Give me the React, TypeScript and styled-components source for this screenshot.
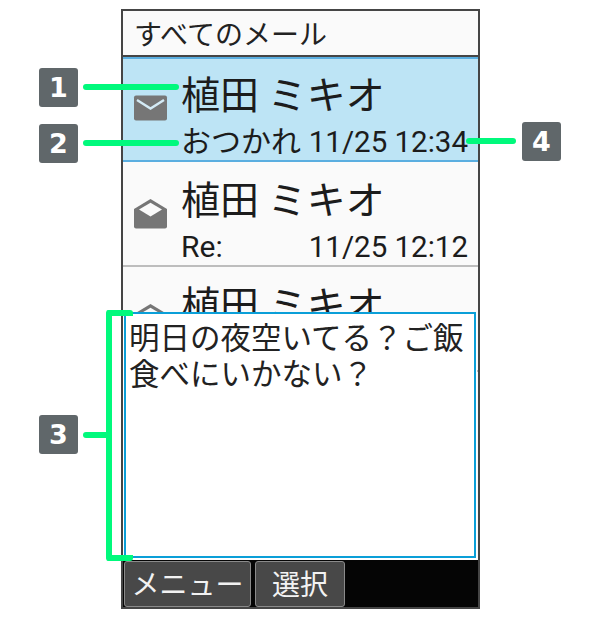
import * as React from 'react';
import styled, { createGlobalStyle } from 'styled-components';

const GlobalStyle = createGlobalStyle`
  html, body {
    margin: 0;
    padding: 0;
    background: #fff;
    font-family: Roboto, "Noto Sans CJK JP", sans-serif;
  }
`;

const Page = styled.div`
  position: relative;
  width: 600px;
  height: 617px;
  overflow: hidden;
  padding: 9px 0 0 121px;
  box-sizing: border-box;
`;

const Phone = styled.div`
  width: 359px;
  height: 600px;
  box-sizing: border-box;
  border: 2px solid #454545;
  background: #fafafa;
  display: flex;
  flex-direction: column;
`;

const Title = styled.div`
  flex: none;
  height: 46px;
  box-sizing: border-box;
  padding: 3px 0 0 11px;
  border-bottom: 2px solid #454545;
  font-size: 28px;
  line-height: 38px;
  color: #222;
  font-family: "Noto Sans CJK JP", sans-serif;
`;

const List = styled.div`
  position: relative;
  flex: 1;
  min-height: 0;
  overflow: hidden;
`;

const Row = styled.div<{ $selected?: boolean }>`
  height: 105px;
  box-sizing: border-box;
  display: flex;
  align-items: center;
  padding-left: 10px;
  background: ${p => (p.$selected ? '#bde4f5' : '#fafafa')};
  border-top: 2px solid ${p => (p.$selected ? '#5aaee0' : 'transparent')};
  border-bottom: 2px solid ${p => (p.$selected ? '#5aaee0' : '#bdbdbd')};
`;

const IconSlot = styled.div`
  flex: none;
  width: 35px;
  margin: 0 13px 3px 0;
  display: flex;
  align-items: center;
`;

const RowText = styled.div`
  flex: 1;
  min-width: 0;
  padding-right: 10px;
  display: flex;
  flex-direction: column;
`;

const Name = styled.div`
  font-size: 39px;
  line-height: 65px;
  color: #1c1c1c;
  white-space: pre;
  font-family: "Noto Sans CJK JP", sans-serif;
`;

const Meta = styled.div`
  display: flex;
  justify-content: space-between;
  align-items: baseline;
  min-height: 34px;
  font-size: 29.5px;
  line-height: 34px;
  color: #1c1c1c;
  white-space: pre;
`;

const Subject = styled.span`
  font-size: 30px;
`;

const Preview = styled.div`
  position: absolute;
  left: 1px;
  top: 255px;
  width: 352px;
  height: 246px;
  box-sizing: border-box;
  border: 2px solid #0a9fd8;
  background: #fff;
  padding: 4px 0 0 3px;
  font-size: 30.5px;
  line-height: 36px;
  color: #222;
  white-space: nowrap;
  font-family: "Noto Sans CJK JP", sans-serif;
  box-shadow: 0 2px 0 1px #fff;
`;

const SoftKeys = styled.div`
  flex: none;
  height: 47px;
  box-sizing: border-box;
  background: #050505;
  display: flex;
  gap: 4px;
  padding: 1px 0 0 1px;
`;

const SoftKey = styled.div<{ $width: number }>`
  width: ${p => p.$width}px;
  box-sizing: border-box;
  border: 1px solid #8a8a8a;
  border-radius: 3px;
  background: #484848;
  color: #f2f2f2;
  font-size: 28px;
  line-height: 42px;
  text-align: center;
  font-family: "Noto Sans CJK JP", sans-serif;
`;

const Badge = styled.div<{ $x: number; $y: number }>`
  position: absolute;
  left: ${p => p.$x}px;
  top: ${p => p.$y}px;
  width: 39px;
  height: 39px;
  border-radius: 3px;
  background: #60676a;
  color: #fff;
  font-family: "DejaVu Sans", sans-serif;
  font-weight: 700;
  font-size: 27px;
  line-height: 39px;
  text-align: center;
`;

const Leader = styled.div<{ $x: number; $y: number; $w: number }>`
  position: absolute;
  left: ${p => p.$x}px;
  top: ${p => p.$y}px;
  width: ${p => p.$w}px;
  height: 6px;
  border-radius: 3px;
  background: #00f97c;
`;

const Bracket = styled.div`
  position: absolute;
  left: 106px;
  top: 310px;
  width: 27px;
  height: 251px;
  box-sizing: border-box;
  border: 6px solid #00f97c;
  border-right: none;
  border-radius: 3px;
`;

const ClosedMail = () => (
  <svg width="35" height="26" viewBox="0 0 35 26">
    <rect x="1" y="0.5" width="33" height="25" rx="2" fill="#767676" />
    <path d="M4 5 L17.5 13.5 L31 5" fill="none" stroke="#d4ebf6" strokeWidth="2.4" />
  </svg>
);

const OpenMail = () => (
  <svg width="35" height="31" viewBox="0 0 35 31">
    <path d="M1 11 L17.5 1 L34 11 V28.5 a2 2 0 0 1 -2 2 H3 a2 2 0 0 1 -2 -2 Z" fill="#767676" />
    <path d="M6 11.5 L17.5 4.8 L29 11.5 L17.5 18.5 Z" fill="#fafafa" />
  </svg>
);

const mails = [
  { subject: 'おつかれ', time: '11/25 12:34', selected: true },
  { subject: 'Re:', time: '11/25 12:12', selected: false },
  { subject: '', time: '', selected: false },
];

export default function App() {
  return (
    <Page>
      <GlobalStyle />
      <Phone>
        <Title>すべてのメール</Title>
        <List>
          {mails.map((m, i) => (
            <Row key={i} $selected={m.selected}>
              <IconSlot>{m.selected ? <ClosedMail /> : <OpenMail />}</IconSlot>
              <RowText>
                <Name>植田 ミキオ</Name>
                <Meta>
                  <Subject>{m.subject}</Subject>
                  <span>{m.time}</span>
                </Meta>
              </RowText>
            </Row>
          ))}
          <Preview>
            明日の夜空いてる？ご飯
            <br />
            食べにいかない？
          </Preview>
        </List>
        <SoftKeys>
          <SoftKey $width={127}>メニュー</SoftKey>
          <SoftKey $width={90}>選択</SoftKey>
        </SoftKeys>
      </Phone>
      <Badge $x={39} $y={68}>1</Badge>
      <Badge $x={39} $y={124}>2</Badge>
      <Badge $x={39} $y={415}>3</Badge>
      <Badge $x={522} $y={122}>4</Badge>
      <Leader $x={83} $y={84} $w={96} />
      <Leader $x={83} $y={140} $w={96} />
      <Leader $x={83} $y={432} $w={26} />
      <Bracket />
      <Leader $x={466} $y={138} $w={50} />
    </Page>
  );
}
